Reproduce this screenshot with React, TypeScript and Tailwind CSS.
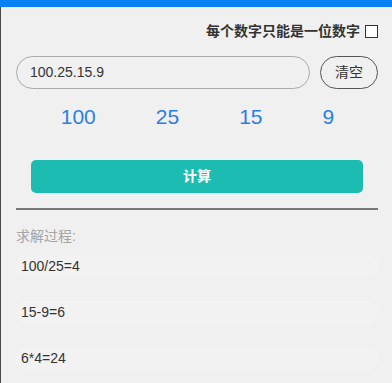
const numbers = ["100", "25", "15", "9"];
const steps = ["100/25=4", "15-9=6", "6*4=24"];

export default function App() {
  return (
    <div className="min-h-[383px] bg-[#f0f0f0] font-['Liberation_Sans','Noto_Sans_CJK_SC',sans-serif] text-[#333]">
      <div className="h-[7px] bg-[#0a80f5]" />
      <div className="min-h-[376px] border-l border-[#4a4a4a] pl-[15px] pr-[14px] pt-[17px]">
        <div className="flex items-center justify-end gap-[5px]">
          <span className="text-[14px] leading-[14px] font-bold text-[#333]">每个数字只能是一位数字</span>
          <span className="h-[13px] w-[13px] border border-[#333] bg-white" />
        </div>

        <div className="mt-[18px] flex gap-[10px]">
          <div className="flex h-[33px] flex-1 items-center rounded-full border border-[#aaa] pl-[13px] text-[14px] text-[#333]">
            100.25.15.9
          </div>
          <button className="h-[33px] w-[58px] rounded-full border border-[#555] text-[14px] text-[#333]">
            清空
          </button>
        </div>

        <div className="mt-[14px] flex justify-center gap-[60px] pl-[1px] text-[21px] leading-[28px] text-[#2a7fe2]">
          {numbers.map((n) => (
            <span key={n}>{n}</span>
          ))}
        </div>

        <button className="mx-[15px] mt-[29px] block h-[33px] w-[calc(100%-30px)] rounded-[5px] bg-[#1dbcb3] text-[14px] font-bold text-white">
          计算
        </button>

        <div className="mt-[15px] h-[2px] bg-[#777]" />

        <div className="mt-[17px] text-[14px] leading-[18px] text-[#a5a5a5]">求解过程:</div>

        <div className="mt-[10px] flex flex-col gap-[23px]">
          {steps.map((s) => (
            <div key={s} className="flex h-[23px] items-center rounded-[10px] bg-[#f2f2f2] pl-[5px] text-[14px] text-[#333]">
              {s}
            </div>
          ))}
        </div>
      </div>
    </div>
  );
}
